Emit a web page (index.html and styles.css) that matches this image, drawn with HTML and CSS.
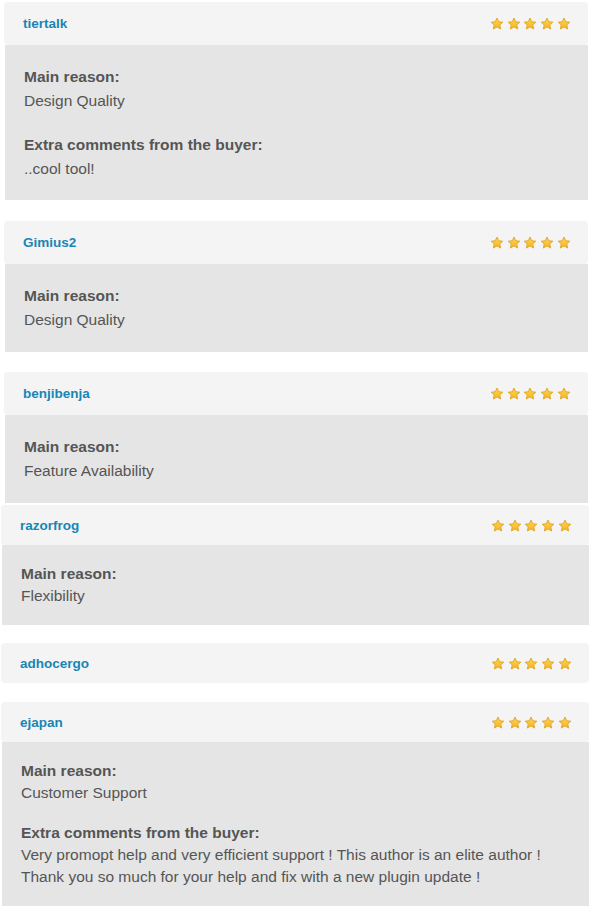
FILE: index.html
```html
<!DOCTYPE html>
<html lang="en">
<head>
<meta charset="utf-8">
<title>Reviews</title>
<link rel="stylesheet" href="styles.css">
</head>
<body>
<svg class="defs" width="0" height="0" aria-hidden="true">
  <defs>
    <linearGradient id="starfill" x1="0" y1="0" x2="0" y2="1">
      <stop offset="0" stop-color="#ffd84a"/>
      <stop offset="1" stop-color="#f7b224"/>
    </linearGradient>
    <symbol id="star" viewBox="0 0 24 24">
      <polygon points="12,1.8 15,8.2 22,8.9 16.7,13.6 18.3,20.6 12,17 5.7,20.6 7.3,13.6 2,8.9 9,8.2" fill="url(#starfill)" stroke="#dda52c" stroke-width="1.6" stroke-linejoin="round"/>
    </symbol>
  </defs>
</svg>

<main class="reviews">
  <article class="review review--first">
    <header class="review__head">
      <span class="review__name">tiertalk</span>
      <span class="stars"><svg class="star"><use href="#star"/></svg><svg class="star"><use href="#star"/></svg><svg class="star"><use href="#star"/></svg><svg class="star"><use href="#star"/></svg><svg class="star"><use href="#star"/></svg></span>
    </header>
    <div class="review__body">
      <p><strong>Main reason:</strong><br>Design Quality</p>
      <p><strong>Extra comments from the buyer:</strong><br>..cool tool!</p>
    </div>
  </article>

  <article class="review review--gap21">
    <header class="review__head">
      <span class="review__name">Gimius2</span>
      <span class="stars"><svg class="star"><use href="#star"/></svg><svg class="star"><use href="#star"/></svg><svg class="star"><use href="#star"/></svg><svg class="star"><use href="#star"/></svg><svg class="star"><use href="#star"/></svg></span>
    </header>
    <div class="review__body">
      <p><strong>Main reason:</strong><br>Design Quality</p>
    </div>
  </article>

  <article class="review review--gap20">
    <header class="review__head">
      <span class="review__name">benjibenja</span>
      <span class="stars"><svg class="star"><use href="#star"/></svg><svg class="star"><use href="#star"/></svg><svg class="star"><use href="#star"/></svg><svg class="star"><use href="#star"/></svg><svg class="star"><use href="#star"/></svg></span>
    </header>
    <div class="review__body">
      <p><strong>Main reason:</strong><br>Feature Availability</p>
    </div>
  </article>

  <article class="review review--compact review--gap2">
    <header class="review__head">
      <span class="review__name">razorfrog</span>
      <span class="stars"><svg class="star"><use href="#star"/></svg><svg class="star"><use href="#star"/></svg><svg class="star"><use href="#star"/></svg><svg class="star"><use href="#star"/></svg><svg class="star"><use href="#star"/></svg></span>
    </header>
    <div class="review__body">
      <p><strong>Main reason:</strong><br>Flexibility</p>
    </div>
  </article>

  <article class="review review--compact review--gap18">
    <header class="review__head">
      <span class="review__name">adhocergo</span>
      <span class="stars"><svg class="star"><use href="#star"/></svg><svg class="star"><use href="#star"/></svg><svg class="star"><use href="#star"/></svg><svg class="star"><use href="#star"/></svg><svg class="star"><use href="#star"/></svg></span>
    </header>
  </article>

  <article class="review review--compact review--gap19">
    <header class="review__head">
      <span class="review__name">ejapan</span>
      <span class="stars"><svg class="star"><use href="#star"/></svg><svg class="star"><use href="#star"/></svg><svg class="star"><use href="#star"/></svg><svg class="star"><use href="#star"/></svg><svg class="star"><use href="#star"/></svg></span>
    </header>
    <div class="review__body">
      <p><strong>Main reason:</strong><br>Customer Support</p>
      <p><strong>Extra comments from the buyer:</strong><br>Very promopt help and very efficient support ! This author is an elite author !<br>Thank you so much for your help and fix with a new plugin update !</p>
    </div>
  </article>
</main>
</body>
</html>
```

FILE: styles.css
```css
html, body {
  margin: 0;
  padding: 0;
  background: #ffffff;
}

body {
  font-family: "Liberation Sans", Arial, Helvetica, sans-serif;
  color: #555555;
}

.defs {
  position: absolute;
  width: 0;
  height: 0;
  overflow: hidden;
}

.reviews {
  display: flex;
  flex-direction: column;
  padding-top: 2px;
}

.review {
  margin-left: 4px;
  width: 584px;
}

.review--gap21 { margin-top: 21px; }
.review--gap20 { margin-top: 20px; }
.review--gap2  { margin-top: 2px; }
.review--gap18 { margin-top: 18px; }
.review--gap19 { margin-top: 19px; }

.review__head {
  height: 43px;
  box-sizing: border-box;
  background: #f4f4f4;
  border-radius: 4px;
  display: flex;
  align-items: center;
  justify-content: space-between;
  padding: 0 17px 0 19px;
}

.review__name {
  font-size: 13.5px;
  font-weight: bold;
  color: #1786b5;
}

.stars {
  display: flex;
  gap: 2.8px;
  margin-top: 1px;
}

.star {
  width: 14px;
  height: 14px;
  display: block;
}

.review__body {
  background: #e5e5e5;
  margin-left: 1px;
  padding: 20px 19px 19px 19px;
  font-size: 15.5px;
  line-height: 24px;
  display: flex;
  flex-direction: column;
  gap: 20px;
}

.review__body p {
  margin: 0;
}

.review__body strong {
  font-weight: bold;
  color: #555555;
}

.review--first .review__body {
  padding-bottom: 19px;
}

.review--gap21 .review__body,
.review--gap20 .review__body {
  padding-bottom: 20px;
}

.review--compact {
  margin-left: 1px;
  width: 588px;
}

.review--compact .review__head {
  height: 40px;
  padding-left: 19px;
}

.review--compact .review__body {
  padding: 18px 19px 18px 19px;
  line-height: 22px;
  gap: 18px;
}
```
